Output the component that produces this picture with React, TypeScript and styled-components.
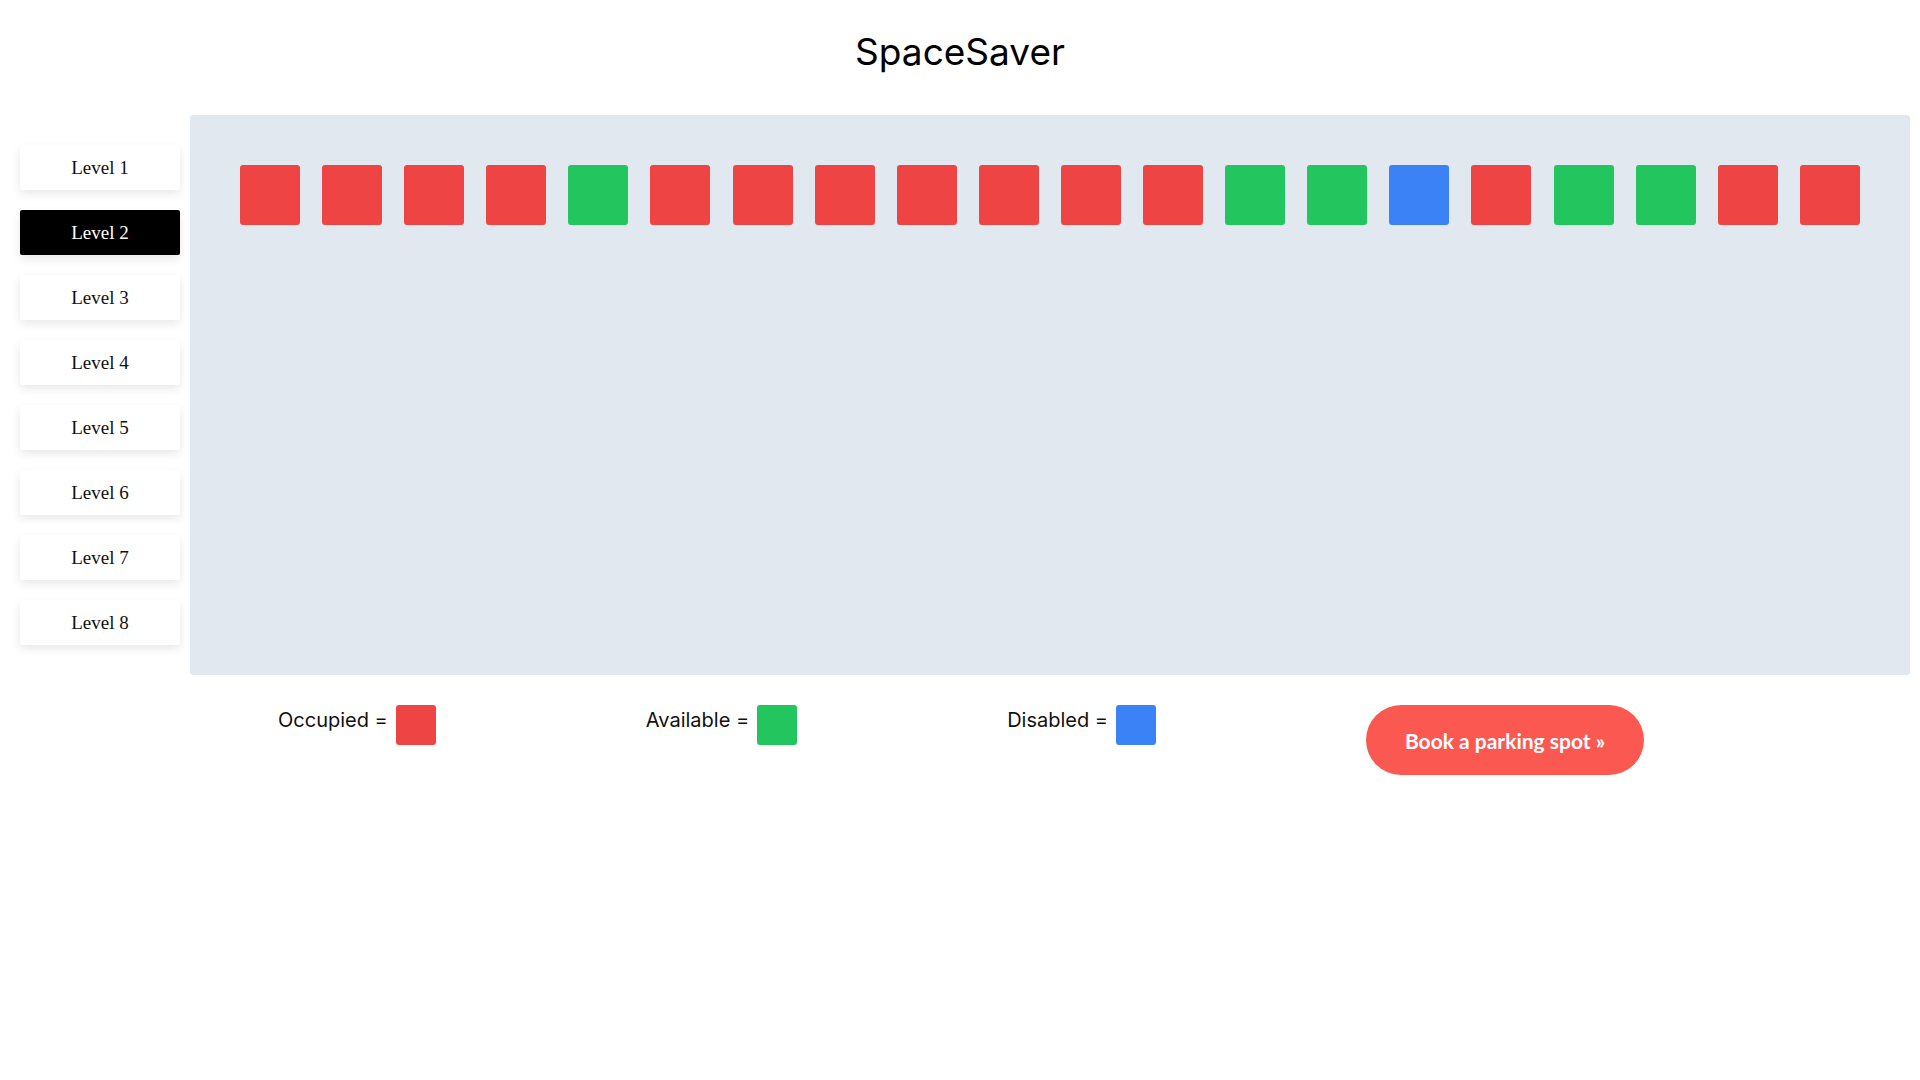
import React from "react";
import styled, { createGlobalStyle } from "styled-components";

const GlobalStyle = createGlobalStyle`
  html, body {
    margin: 0;
    padding: 0;
    background: #ffffff;
  }
  body {
    font-family: Inter, "Liberation Sans", sans-serif;
    color: #000000;
  }
`;

const Page = styled.div`
  width: 1920px;
  min-height: 1080px;
  display: flex;
  flex-direction: column;
`;

const Title = styled.h1`
  margin: 30px 0 41px;
  text-align: center;
  font-family: Inter, "Liberation Sans", sans-serif;
  font-size: 37px;
  font-weight: 400;
  line-height: 44px;
  color: #000;
`;

const Body = styled.div`
  display: flex;
  align-items: flex-start;
`;

const Sidebar = styled.nav`
  width: 160px;
  padding: 30px 10px 0 20px;
  display: flex;
  flex-direction: column;
  gap: 20px;
`;

const LevelButton = styled.button<{ $active?: boolean }>`
  width: 160px;
  height: 45px;
  border: none;
  border-radius: 2px;
  background: ${(p) => (p.$active ? "#000000" : "#ffffff")};
  color: ${(p) => (p.$active ? "#ffffff" : "#111111")};
  font-family: "Liberation Serif", "DejaVu Serif", serif;
  font-size: 19px;
  box-shadow: 0 4px 10px rgba(0, 0, 0, 0.09);
  cursor: pointer;
  padding: 0;
`;

const Main = styled.main`
  width: 1720px;
  display: flex;
  flex-direction: column;
`;

const Lot = styled.section`
  height: 560px;
  box-sizing: border-box;
  background: #e2e8f0;
  border-radius: 3px;
  padding: 50px;
  display: flex;
  justify-content: space-between;
  align-items: flex-start;
`;

const Spot = styled.div<{ $color: string }>`
  width: 60px;
  height: 60px;
  border-radius: 3px;
  background: ${(p) => p.$color};
`;

const Legend = styled.div`
  display: flex;
  align-items: flex-start;
  gap: 210px;
  padding: 30px 0 0 88px;
`;

const LegendItem = styled.div`
  display: flex;
  align-items: flex-start;
  gap: 8px;
`;

const LegendLabel = styled.span`
  font-family: Inter, "Liberation Sans", sans-serif;
  font-size: 20px;
  line-height: 30px;
  color: #111;
`;

const Swatch = styled.div<{ $color: string }>`
  width: 40px;
  height: 40px;
  border-radius: 3px;
  background: ${(p) => p.$color};
`;

const BookButton = styled.button`
  width: 278px;
  height: 70px;
  border: none;
  border-radius: 35px;
  background: #fc5852;
  color: #ffffff;
  font-family: Lato, "Open Sans", sans-serif;
  font-weight: 700;
  font-size: 21px;
  cursor: pointer;
  padding: 0;
`;

const RED = "#ef4444";
const GREEN = "#22c55e";
const BLUE = "#3b82f6";

const spots = "RRRRGRRRRRRRGGBRGGRR".split("").map((c) =>
  c === "R" ? RED : c === "G" ? GREEN : BLUE
);

const levels = [1, 2, 3, 4, 5, 6, 7, 8];

export default function App() {
  return (
    <Page>
      <GlobalStyle />
      <Title>SpaceSaver</Title>
      <Body>
        <Sidebar>
          {levels.map((l) => (
            <LevelButton key={l} $active={l === 2}>
              Level {l}
            </LevelButton>
          ))}
        </Sidebar>
        <Main>
          <Lot>
            {spots.map((c, i) => (
              <Spot key={i} $color={c} />
            ))}
          </Lot>
          <Legend>
            <LegendItem>
              <LegendLabel>Occupied =</LegendLabel>
              <Swatch $color={RED} />
            </LegendItem>
            <LegendItem>
              <LegendLabel>Available =</LegendLabel>
              <Swatch $color={GREEN} />
            </LegendItem>
            <LegendItem>
              <LegendLabel>Disabled =</LegendLabel>
              <Swatch $color={BLUE} />
            </LegendItem>
            <BookButton>Book a parking spot »</BookButton>
          </Legend>
        </Main>
      </Body>
    </Page>
  );
}
